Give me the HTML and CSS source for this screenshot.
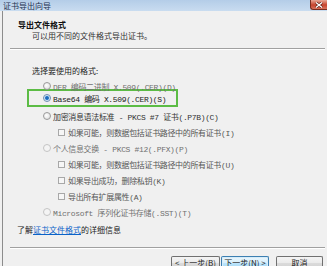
FILE: index.html
```html
<!DOCTYPE html>
<html lang="zh-CN">
<head>
  <meta charset="UTF-8" />
  <title>证书导出向导</title>
  <link rel="stylesheet" href="styles.css">
</head>
<body>
  <div class="titlebar">
    <span class="title">证书导出向导</span>
    <span class="close">
      <svg width="8" height="6" viewBox="0 0 8 6"><path d="M1 0.5 L7 5.5 M7 0.5 L1 5.5" stroke="#5a1c12" stroke-width="2.6"/><path d="M1 0.5 L7 5.5 M7 0.5 L1 5.5" stroke="#fff" stroke-width="1.4"/></svg>
    </span>
  </div>

  <div class="client">
    <div class="head">
      <div class="head-title">导出文件格式</div>
      <div class="head-sub">可以用不同的文件格式导出证书。</div>
    </div>
    <div class="sep"></div>

    <div class="content">
      <div class="label">选择要使用的格式:</div>
      <div class="options">
        <div class="opt dim"><span class="radio"></span>DER 编码二进制 X.509(.CER)(D)</div>
        <div class="hl">
          <div class="opt"><span class="radio on"></span>Base64 编码 X.509(.CER)(S)</div>
        </div>
        <div class="opt"><span class="radio"></span>加密消息语法标准 - PKCS #7 证书(.P7B)(C)</div>
        <div class="opt sub"><span class="check"></span>如果可能，则数据包括证书路径中的所有证书(I)</div>
        <div class="opt dim"><span class="radio off"></span>个人信息交换 - PKCS #12(.PFX)(P)</div>
        <div class="opt sub"><span class="check"></span>如果可能，则数据包括证书路径中的所有证书(U)</div>
        <div class="opt sub"><span class="check"></span>如果导出成功，删除私钥(K)</div>
        <div class="opt sub"><span class="check"></span>导出所有扩展属性(A)</div>
        <div class="opt dim"><span class="radio off"></span>Microsoft 序列化证书存储(.SST)(T)</div>
      </div>
    </div>

    <div class="more">了解<a href="#">证书文件格式</a>的详细信息</div>
    <div class="sep sep2"></div>

    <div class="buttons">
      <button class="btn back">&lt; 上一步(B)</button>
      <button class="btn next">下一步(N) &gt;</button>
      <button class="btn cancel">取消</button>
    </div>
  </div>
</body>
</html>
```

FILE: styles.css
```css
body {
  margin: 0;
  width: 327px;
  height: 266px;
  overflow: hidden;
  background: #f0f0f0;
  font-family: "Noto Sans CJK SC", sans-serif;
  font-size: 8px;
  color: #222;
}

.titlebar {
  height: 11px;
  display: flex;
  justify-content: space-between;
  align-items: flex-start;
  background: linear-gradient(#b4cde8, #c9dcf0);
}

.title {
  padding-left: 3px;
  line-height: 11px;
  color: #1c3150;
}

.close {
  width: 17px;
  height: 10px;
  box-sizing: border-box;
  display: flex;
  align-items: center;
  justify-content: center;
  background: linear-gradient(#e9a896, #c7442d 55%, #d8715a);
  border: 1px solid #7a2e20;
  border-top: none;
  border-right: none;
  border-radius: 0 0 0 3px;
}

.client {
  margin-left: 2px;
  border-left: 1px solid #8c8c8c;
  height: 255px;
}

.head {
  padding: 8px 0 0 15px;
}

.head-title {
  font-weight: bold;
  line-height: 11px;
  color: #111;
}

.head-sub {
  padding-left: 14px;
  line-height: 11px;
  color: #333;
}

.sep {
  margin: 7px 2px 0 7px;
  border-top: 1px solid #a0a0a0;
  border-bottom: 1px solid #fff;
}

.content {
  padding: 14px 0 0 29px;
}

.label {
  line-height: 14px;
  color: #222;
}

.options {
  padding-left: 11px;
  font-family: "Liberation Mono", "Noto Sans CJK SC", monospace;
  letter-spacing: -0.35px;
}

.opt {
  display: flex;
  align-items: center;
  gap: 2px;
  height: 16px;
  white-space: nowrap;
  color: #333;
}

.opt.dim {
  color: #707070;
}

.opt.sub {
  padding-left: 15px;
  gap: 3px;
  color: #555;
}

.hl {
  margin: -5px 0 1px -16px;
  width: 151px;
  box-sizing: border-box;
  border: 2px solid #5cbc45;
  padding-left: 14px;
}

.hl .opt {
  height: 14px;
  color: #222;
}

.radio {
  width: 8px;
  height: 8px;
  box-sizing: border-box;
  border-radius: 50%;
  border: 1px solid #9a9a9a;
  background: radial-gradient(circle at 40% 40%, #fff, #d8d8d8);
  flex: none;
}

.radio.off {
  border-color: #c4c4c4;
  background: #f4f4f4;
}

.radio.on {
  border-color: #6f8fb0;
  background: radial-gradient(circle, #1a58a3 0, #2f7fd0 1.6px, #cfe3f6 2.4px, #eef5fc 4px);
}

.check {
  width: 7px;
  height: 7px;
  box-sizing: border-box;
  border: 1px solid #a8a8a8;
  background: #f6f6f6;
  flex: none;
}

.more {
  margin-top: 3px;
  padding-left: 14px;
  line-height: 14px;
  color: #222;
}

.more a {
  color: #0a62c8;
  text-decoration: underline;
}

.sep2 {
  margin-top: 10px;
}

.buttons {
  display: flex;
  justify-content: flex-end;
  padding: 7px 4px 0 0;
}

.btn {
  height: 12px;
  padding: 0;
  font-family: "Noto Sans CJK SC", sans-serif;
  font-size: 8px;
  line-height: 10px;
  color: #222;
  border: 1px solid #707070;
  border-bottom: none;
  border-radius: 2px 2px 0 0;
  background: linear-gradient(#f4f4f4, #ebebeb 50%, #dcdcdc 51%, #d2d2d2);
}

.back {
  width: 49px;
}

.next {
  width: 48px;
  margin-left: 1px;
  border-color: #3c7fb1;
  background: linear-gradient(#eaf6fd, #d9f0fc 50%, #bee6fd 51%, #a7d9f5);
  box-shadow: inset 1px 1px 0 #d6ecf9, inset -1px 0 0 #d6ecf9;
}

.cancel {
  width: 47px;
  margin-left: 7px;
}
```
